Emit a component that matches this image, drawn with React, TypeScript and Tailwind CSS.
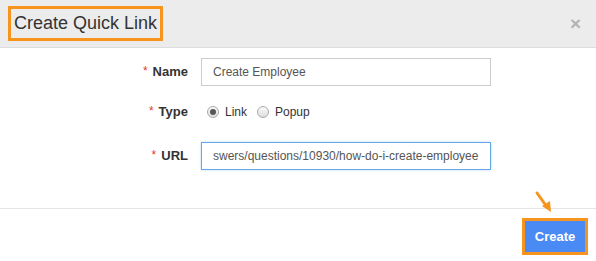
import type { JSX } from "react";

const Row = ({ label, children }: { label: string; children: React.ReactNode }): JSX.Element => (
  <div className="flex items-center h-[28px]">
    <div className="w-[188px] shrink-0 text-right text-[13px] font-bold text-[#333]">
      <span className="text-[#e53935] font-normal mr-[5px] text-[12px] relative -top-[1px]">*</span>
      {label}
    </div>
    <div className="ml-[13px] flex items-center h-full">{children}</div>
  </div>
);

const Radio = ({ checked, label }: { checked?: boolean; label: string }): JSX.Element => (
  <label className="flex items-center gap-[6px] text-[12px] text-[#333] mr-[10px]">
    <span className="w-[12px] h-[12px] rounded-full border border-[#aaa] bg-gradient-to-b from-[#fafafa] to-[#dedede] flex items-center justify-center">
      {checked && <span className="w-[6px] h-[6px] rounded-full bg-[#555]" />}
    </span>
    {label}
  </label>
);

export default function App(): JSX.Element {
  return (
    <div className="relative w-[596px] h-[261px] bg-white overflow-hidden [font-family:'Liberation_Sans',Arial,sans-serif]">
      <div className="flex items-center justify-between h-[48px] bg-[#ececec] border-b border-[#dcdcdc]">
        <div className="ml-[8px] mb-[1px] h-[35px] px-[3px] border-[3px] border-[#f7941e] flex items-center text-[18px] text-[#333]">
          Create Quick Link
        </div>
        <span className="mr-[15px] text-[19px] font-bold text-[#b3b3b3] leading-none">×</span>
      </div>

      <div className="pt-[10px] pb-[38px]">
        <Row label="Name">
          <div className="w-[290px] h-[28px] border border-[#ccc] flex items-center px-[11px] text-[12px] text-[#555]">
            Create Employee
          </div>
        </Row>
        <div className="mt-[12px]">
          <Row label="Type">
            <div className="flex items-center pl-[6px]">
              <Radio checked label="Link" />
              <Radio label="Popup" />
            </div>
          </Row>
        </div>
        <div className="mt-[16px]">
          <Row label="URL">
            <div className="w-[290px] h-[28px] border border-[#66a6ea] flex items-center px-[11px] text-[12px] text-[#555] overflow-hidden whitespace-nowrap shadow-[0_0_2px_rgba(102,166,234,0.5)]">
              swers/questions/10930/how-do-i-create-employee
            </div>
          </Row>
        </div>
      </div>

      <div className="border-t border-[#e5e5e5] flex justify-end pt-[9px] pr-[8px]">
        <div className="border-[3px] border-[#f7941e] w-[66px] h-[37px]">
          <button className="w-full h-full bg-[#4a8af4] text-white text-[13px] font-bold">Create</button>
        </div>
      </div>

      <svg className="absolute left-[533px] top-[189px]" width="22" height="26" viewBox="0 0 22 26">
        <line x1="4" y1="4" x2="14" y2="18" stroke="#f7941e" strokeWidth="3" strokeLinecap="round" />
        <polygon points="9,17 18,23 17,12" fill="#f7941e" />
      </svg>
    </div>
  );
}
